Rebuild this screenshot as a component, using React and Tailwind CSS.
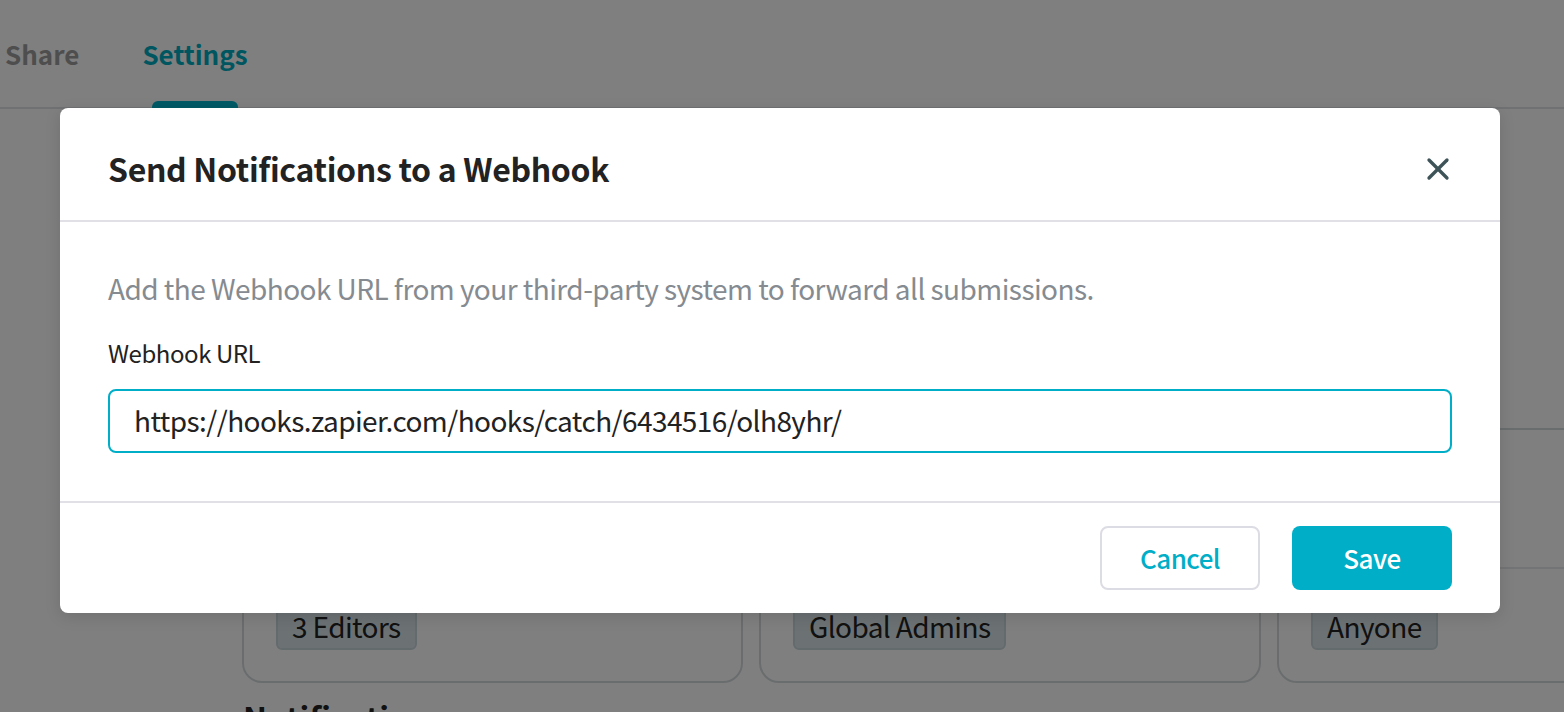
import { X } from 'lucide-react';

var FONT = { fontFamily: '"Noto Sans CJK JP", "Noto Sans", sans-serif' };

function PermissionCard({ label, showHelp, className }) {
  return (
    <div className={'h-[255px] shrink-0 rounded-[20px] border-2 border-[#d5dadd] bg-white ' + className}>
      <div className="flex h-[139px] items-end justify-end border-b-2 border-[#e6e8ea] pb-[16px] pr-[30px]">
        {showHelp && (
          <svg width="28" height="28" viewBox="0 0 28 28" fill="none" className="text-[#9fb0b4]">
            <circle cx="14" cy="14" r="12" stroke="currentColor" strokeWidth="2.4" />
            <path d="M10 11c0-2.4 1.8-4 4-4s4 1.5 4 3.6c0 3.2-4 3-4 6.2" stroke="currentColor" strokeWidth="2.4" fill="none" />
            <circle cx="14" cy="21" r="1.6" fill="currentColor" />
          </svg>
        )}
      </div>
      <div className="pl-[32px] pt-[37px]">
        <span className="inline-block h-[44px] rounded-[6px] border-2 border-[#c9d6db] bg-[#d8e4e9] px-[14px] text-[28px] leading-[36px] tracking-[-0.6px] text-[#222]">
          {label}
        </span>
      </div>
    </div>
  );
}

export default function App() {
  return (
    <div style={FONT} className="relative h-[712px] w-[1564px] overflow-hidden bg-white">
      {/* page behind the dialog */}
      <div className="flex h-[109px] border-b-2 border-[#dfe3e5]">
        <div className="relative flex w-full">
          <span className="ml-[5px] mt-[34px] text-[26px] font-bold leading-[40px] text-[#9c9c9c]">Share</span>
          <div className="relative ml-[63px]">
            <span className="mt-[34px] block text-[26px] font-bold leading-[40px] text-[#00acc0]">Settings</span>
            <div className="absolute left-[10px] top-[101px] h-[7px] w-[86px] rounded-t-[6px] bg-[#00b4cc]" />
          </div>
        </div>
      </div>
      <div className="flex gap-[16px] pl-[242px] pt-[319px]">
        <PermissionCard label="3 Editors" className="w-[501px]" />
        <PermissionCard label="Global Admins" className="w-[502px]" />
        <PermissionCard label="Anyone" showHelp className="w-[400px]" />
      </div>
      <div className="pl-[243px] pt-[14px] text-[32px] font-bold leading-[40px] text-[#222]">Notifications</div>

      {/* overlay and dialog */}
      <div className="absolute inset-0 bg-black/50 pl-[60px] pt-[108px]">
        <div className="h-[505px] w-[1440px] rounded-[8px] bg-white shadow-[0_4px_16px_rgba(0,0,0,0.12)]">
          <div className="flex h-[114px] items-center justify-between border-b-2 border-[#e0e0e6] pl-[48px] pr-[44px] pt-[8px]">
            <h2 className="text-[32px] font-semibold tracking-[-0.32px] text-[#222]">Send Notifications to a Webhook</h2>
            <X className="mt-[2px] h-[36px] w-[36px] text-[#3d5358]" strokeWidth={2.2} />
          </div>
          <div className="h-[281px] border-b-2 border-[#e0e0e6] px-[48px] pt-[46px]">
            <p className="text-[28px] leading-[40px] tracking-[-0.55px] text-[#858b90]">
              Add the Webhook URL from your third-party system to forward all submissions.
            </p>
            <label className="mt-[29px] block text-[24px] leading-[32px] tracking-[-0.45px] text-[#222]">Webhook URL</label>
            <div className="mt-[20px] flex h-[64px] items-center rounded-[8px] border-2 border-[#00aec7] px-[24px] pb-[2px] text-[28px] tracking-[-0.57px] text-[#222]">
              https://hooks.zapier.com/hooks/catch/6434516/olh8yhr/
            </div>
          </div>
          <div className="flex justify-end gap-[32px] px-[48px] pt-[23px]">
            <button className="h-[64px] w-[160px] rounded-[8px] border-2 border-[#dcdce4] bg-white pb-[2px] text-[26px] font-medium tracking-[-0.5px] text-[#00aec7]">
              Cancel
            </button>
            <button className="h-[64px] w-[160px] rounded-[8px] bg-[#00aec7] pb-[2px] text-[26px] font-medium tracking-[-0.5px] text-white">
              Save
            </button>
          </div>
        </div>
      </div>
    </div>
  );
}
